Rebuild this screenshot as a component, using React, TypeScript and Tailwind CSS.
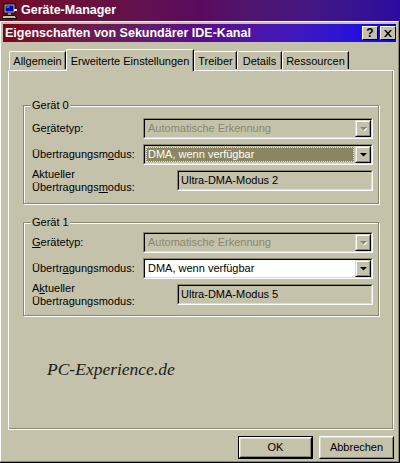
import React from 'react';

function DownArrow({ disabled }: { disabled?: boolean }) {
  return (
    <svg width="7" height="4" viewBox="0 0 7 4">
      {disabled && <path d="M1 1h7L4.5 4.5z" fill="#ffffff" />}
      <path d="M0 0h7L3.5 3.5z" fill={disabled ? '#8a876f' : '#000000'} />
    </svg>
  );
}

function Combo({ text, disabled, focused, white }: { text: string; disabled?: boolean; focused?: boolean; white?: boolean }) {
  return (
    <div className="w-[230px] h-[21px] border border-t-[#8a876f] border-l-[#8a876f] border-r-white border-b-white">
      <div className={`h-full flex border border-t-black border-l-black border-r-[#dedbcb] border-b-[#dedbcb] ${white ? 'bg-white' : 'bg-[#c5c2ab]'}`}>
        <div className="flex-1 p-[1px]">
          {focused ? (
            <div className="h-full bg-[#8a8660] text-white border border-dotted border-[#e9e7da] pl-[1px] flex items-center leading-none">{text}</div>
          ) : (
            <div className={`h-full pl-[2px] flex items-center leading-none ${disabled ? 'text-[#8a876f]' : 'text-black'}`}>{text}</div>
          )}
        </div>
        <div className="w-[16px] h-full border border-t-[#dedbcb] border-l-[#dedbcb] border-r-black border-b-black">
          <div className="h-full flex items-center justify-center border border-t-white border-l-white border-r-[#8a876f] border-b-[#8a876f] bg-[#c5c2ab]">
            <DownArrow disabled={disabled} />
          </div>
        </div>
      </div>
    </div>
  );
}

function Field({ text }: { text: string }) {
  return (
    <div className="w-[196px] h-[21px] border border-t-[#8a876f] border-l-[#8a876f] border-r-white border-b-white">
      <div className="h-full border border-t-black border-l-black border-r-[#dedbcb] border-b-[#dedbcb] bg-[#c5c2ab] pl-[2px] flex items-center leading-none">
        {text}
      </div>
    </div>
  );
}

function Group({ title, children, className }: { title: string; children: React.ReactNode; className: string }) {
  return (
    <div className={`relative w-[356px] ml-[14px] border border-[#8a876f] shadow-[inset_1px_1px_0_#ffffff,1px_1px_0_#ffffff] pl-[8px] pr-[5px] ${className}`}>
      <div className="absolute -top-[8px] left-[7px] px-[1px] bg-[#c5c2ab] leading-[14px]">{title}</div>
      {children}
    </div>
  );
}

function Tab({ label, w, active }: { label: string; w: string; active?: boolean }) {
  if (active) {
    return (
      <div className={`${w} h-[22px] relative z-10 -mb-[1px] bg-[#c5c2ab] border-t border-l border-white rounded-tl-[2px] border-r border-r-black shadow-[inset_-1px_0_0_#8a876f] flex items-start justify-center pt-[3px]`}>
        {label}
      </div>
    );
  }
  return (
    <div className={`${w} h-[18px] mt-[2px] bg-[#c5c2ab] border-t border-l border-white rounded-tl-[2px] border-r border-r-black shadow-[inset_-1px_0_0_#8a876f] flex items-start justify-center pt-[1px]`}>
      {label}
    </div>
  );
}

function RaisedButton({ label, isDefault }: { label: string; isDefault?: boolean }) {
  return (
    <div className={`w-[75px] h-[23px] ${isDefault ? 'border border-black' : ''}`}>
      <div className="h-full border border-t-white border-l-white border-r-black border-b-black">
        <div className="h-full flex items-center justify-center border border-t-[#dedbcb] border-l-[#dedbcb] border-r-[#8a876f] border-b-[#8a876f] leading-none">
          {label}
        </div>
      </div>
    </div>
  );
}

function DeviceIcon() {
  return (
    <svg width="16" height="16" viewBox="0 0 16 16">
      <rect x="2" y="1" width="11" height="9" fill="#c5c2ab" stroke="#000" strokeWidth="1" />
      <rect x="3.5" y="2.5" width="8" height="6" fill="#0000c8" />
      <rect x="4.5" y="3.5" width="3" height="1" fill="#8cc8ff" />
      <rect x="6" y="10" width="3" height="2" fill="#8a876f" />
      <path d="M1 12.5h12l2 3H0z" fill="#c5c2ab" stroke="#000" strokeWidth="1" />
      <rect x="12" y="6" width="3" height="2" fill="#fff" />
    </svg>
  );
}

export default function App() {
  return (
    <div className="w-[400px] h-[463px] bg-[#c5c2ab] overflow-hidden flex flex-col font-['Liberation_Sans',Arial,sans-serif] text-[11px] text-black">
      {/* Parent window title bar */}
      <div className="h-[21px] flex items-center gap-[3px] pl-[2px] bg-gradient-to-r from-[#740a22] via-[#5a0a5e] to-[#2c0aa0]">
        <DeviceIcon />
        <span className="text-white font-bold text-[12.5px] leading-none">Geräte-Manager</span>
      </div>

      {/* Dialog */}
      <div className="flex-1 border-r border-b border-black">
        <div className="h-full border-t border-l border-white border-r border-b border-r-[#8a876f] border-b-[#8a876f] p-[2px] flex flex-col">
          <div className="h-[18px] flex items-center pl-[2px] bg-gradient-to-r from-[#800014] via-[#5a0a8c] to-[#0000f0]">
            <span className="flex-1 text-white font-bold text-[12.5px] leading-none">Eigenschaften von Sekundärer IDE-Kanal</span>
            <div className="w-[16px] h-[14px] border border-t-white border-l-white border-r-black border-b-black bg-[#c5c2ab] flex items-center justify-center font-bold text-[12px] leading-none">?</div>
            <div className="w-[16px] h-[14px] ml-[2px] border border-t-white border-l-white border-r-black border-b-black bg-[#c5c2ab] flex items-center justify-center">
              <svg width="8" height="7" viewBox="0 0 8 7">
                <path d="M0 0h2l2 2.5L6 0h2L5 3.5 8 7H6L4 4.5 2 7H0l3-3.5z" fill="#000" />
              </svg>
            </div>
          </div>

          {/* Tabs */}
          <div className="flex mt-[7px] ml-[6px] h-[21px] items-start">
            <Tab label="Allgemein" w="w-[57px]" />
            <Tab label="Erweiterte Einstellungen" w="w-[128px]" active />
            <Tab label="Treiber" w="w-[43px]" />
            <Tab label="Details" w="w-[45px]" />
            <Tab label="Ressourcen" w="w-[67px]" />
          </div>

          {/* Tab panel */}
          <div className="ml-[5px] w-[386px] h-[360px] border-t border-l border-white border-r border-b border-black shadow-[inset_-1px_-1px_0_#8a876f] flex flex-col">
            <Group title="Gerät 0" className="mt-[34px] pt-[12px] pb-[12px]">
              <div className="flex items-center h-[21px]">
                <div className="w-[111px]">
                  Ge<u>r</u>ätetyp:
                </div>
                <Combo text="Automatische Erkennung" disabled />
              </div>
              <div className="flex items-center h-[21px] mt-[5px]">
                <div className="w-[111px]">
                  Übertragungsm<u>o</u>dus:
                </div>
                <Combo text="DMA, wenn verfügbar" focused />
              </div>
              <div className="flex items-center h-[21px] mt-[5px]">
                <div className="w-[145px] leading-[13px]">
                  Aktueller
                  <br />
                  Übertragungs<u>m</u>odus:
                </div>
                <Field text="Ultra-DMA-Modus 2" />
              </div>
            </Group>

            <Group title="Gerät 1" className="mt-[18px] pt-[9px] pb-[10px]">
              <div className="flex items-center h-[21px]">
                <div className="w-[111px]">
                  <u>G</u>erätetyp:
                </div>
                <Combo text="Automatische Erkennung" disabled />
              </div>
              <div className="flex items-center h-[21px] mt-[5px]">
                <div className="w-[111px]">
                  Übertr<u>a</u>gungsmodus:
                </div>
                <Combo text="DMA, wenn verfügbar" white />
              </div>
              <div className="flex items-center h-[21px] mt-[5px]">
                <div className="w-[145px] leading-[13px]">
                  A<u>k</u>tueller
                  <br />
                  Übertragungsmodus:
                </div>
                <Field text="Ultra-DMA-Modus 5" />
              </div>
            </Group>

            <div className="mt-[42px] ml-[38px] font-['Liberation_Serif',serif] italic text-[17.5px] leading-[22px] text-[#1a1a1a]">
              PC-Experience.de
            </div>
          </div>

          {/* Buttons */}
          <div className="flex justify-end gap-[6px] mt-[6px] mr-[2px]">
            <RaisedButton label="OK" isDefault />
            <RaisedButton label="Abbrechen" />
          </div>
        </div>
      </div>
    </div>
  );
}
